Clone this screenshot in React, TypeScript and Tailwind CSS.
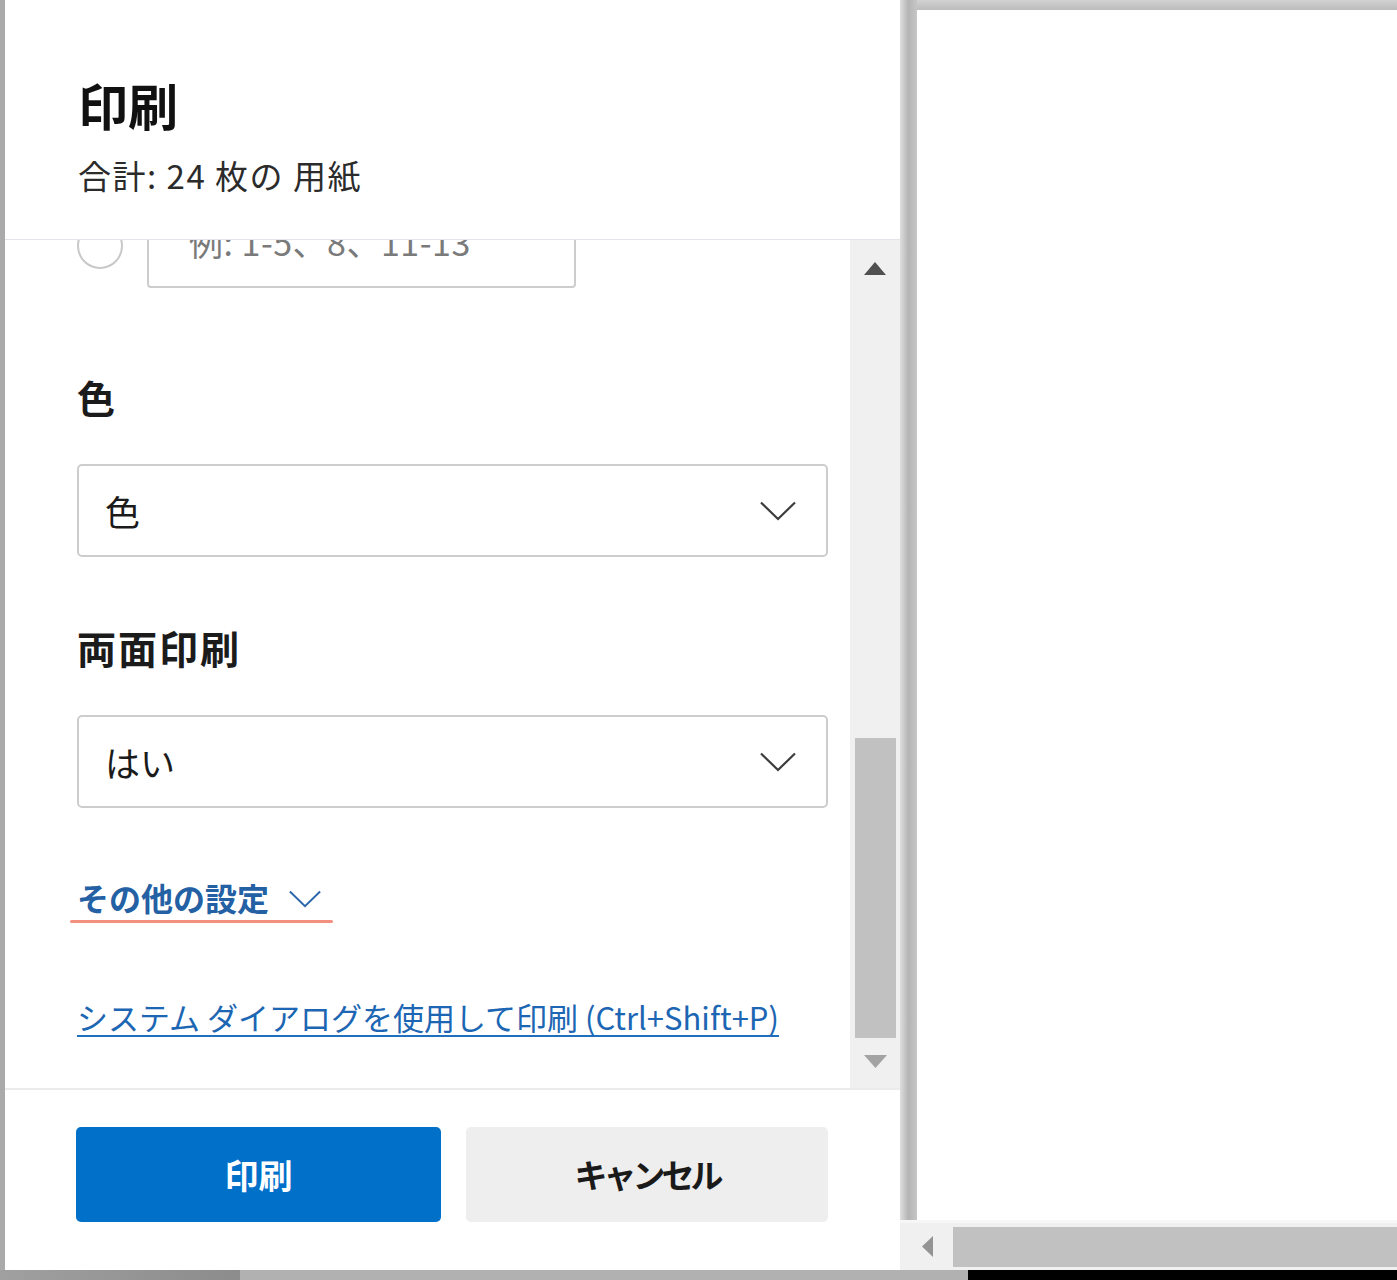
function Chevron({ className, color }: { className: string; color: string }) {
  return (
    <svg viewBox="0 0 36 20" className={className} fill="none">
      <path d="M1 1.5 L18 18 L35 1.5" stroke={color} strokeWidth="2.2" />
    </svg>
  );
}

function Select({ value }: { value: string }) {
  return (
    <div className="flex h-[93px] w-[751px] items-center justify-between rounded-[5px] border-2 border-[#cdcdcd] pl-[26px] pr-[30px]">
      <span className="text-[35px] leading-none text-[#1b1b1b]">{value}</span>
      <Chevron className="h-[20px] w-[36px]" color="#3d3d3d" />
    </div>
  );
}

export default function App() {
  return (
    <div className="flex h-[1280px] w-[1397px] flex-col overflow-hidden bg-[#b3b3b3] font-['Noto_Sans_CJK_JP',sans-serif]">
      <div className="flex h-[1270px]">
        <div className="w-[5px] bg-[#aaaaaa]" />

        {/* settings panel */}
        <div className="flex w-[895px] flex-col bg-white">
          <header className="h-[240px] border-b border-[#e4e4ec] pl-[73px] pt-[79px]">
            <h1 className="text-[50px] font-bold leading-none text-[#111]">印刷</h1>
            <p className="mt-[30px] text-[33px] leading-none tracking-[1.5px] text-[#2b2b2b]">合計: 24 枚の 用紙</p>
          </header>

          <div className="flex h-[848px]">
            <div className="flex-1 overflow-hidden pl-[72px]">
              <div className="mt-[-45px]">
                <div className="flex h-[93px] items-center gap-[24px]">
                  <div className="mt-[9px] h-[46px] w-[46px] rounded-full border-2 border-[#c8c8c8]" />
                  <div className="flex h-[93px] w-[429px] items-center rounded-[4px] border-2 border-[#cdcdcd] pl-[40px]">
                    <span className="text-[34px] leading-none tracking-[0.5px] text-[#7a7a7a]">例: 1-5、8、11-13</span>
                  </div>
                </div>

                <h2 className="mt-[90px] text-[38px] font-bold leading-none text-[#1b1b1b]">色</h2>
                <div className="mt-[48px]">
                  <Select value="色" />
                </div>

                <h2 className="mt-[71px] text-[39px] font-bold leading-none tracking-[2px] text-[#1b1b1b]">両面印刷</h2>
                <div className="mt-[48px]">
                  <Select value="はい" />
                </div>

                <div className="mt-[73px] flex items-center gap-[20px]">
                  <span className="text-[32px] font-semibold leading-none text-[#2460a4]">その他の設定</span>
                  <Chevron className="mt-[4px] h-[18px] w-[32px]" color="#2b66ab" />
                </div>
                <div className="ml-[-7px] mt-[7px] h-[3px] w-[263px] rounded-full bg-[#f4907f]" />

                <div className="mt-[78px]">
                  <span className="inline-block border-b-2 border-[#1f6fbf] pb-[3px] text-[31px] leading-none text-[#1c66b3]">
                    システム ダイアログを使用して印刷 (Ctrl+Shift+P)
                  </span>
                </div>
              </div>
            </div>

            {/* vertical scrollbar */}
            <div className="flex w-[50px] flex-col bg-[#f0f0f0]">
              <svg viewBox="0 0 22 13" className="ml-[14px] mt-[22px] h-[13px] w-[22px]">
                <path d="M11 0 L22 13 L0 13 Z" fill="#505050" />
              </svg>
              <div className="ml-[5px] mt-[463px] h-[300px] w-[41px] bg-[#c1c1c1]" />
              <svg viewBox="0 0 23 13" className="ml-[14px] mt-[17px] h-[13px] w-[23px]">
                <path d="M0 0 L23 0 L11.5 13 Z" fill="#a3a3a3" />
              </svg>
            </div>
          </div>

          <footer className="flex flex-1 gap-[25px] border-t-2 border-[#ebebeb] pl-[71px] pt-[37px]">
            <button className="h-[95px] w-[365px] rounded-[5px] bg-[#0070c9] text-[34px] font-bold text-white">
              印刷
            </button>
            <button className="h-[95px] w-[362px] rounded-[5px] bg-[#eeeeee] text-[33px] font-bold tracking-[-4px] text-[#1a1a1a]">
              キャンセル
            </button>
          </footer>
        </div>

        {/* preview */}
        <div className="flex flex-1 flex-col">
          <div className="flex flex-1">
            <div className="w-[17px] bg-gradient-to-r from-[#dedede] via-[#b4b4b4] to-[#c6c6c6]" />
            <div className="flex flex-1 flex-col">
              <div className="h-[10px] bg-gradient-to-b from-[#d2d2d2] to-[#bcbcbc]" />
              <div className="flex-1 bg-white" />
            </div>
          </div>
          <div className="flex h-[50px] items-center border-t-[3px] border-[#f6f6f6] bg-[#f0f0f0]">
            <svg viewBox="0 0 11 21" className="ml-[22px] h-[21px] w-[11px]">
              <path d="M11 0 L11 21 L0 10.5 Z" fill="#949494" />
            </svg>
            <div className="ml-[20px] h-[40px] flex-1 bg-[#c1c1c1]" />
          </div>
        </div>
      </div>

      <div className="flex h-[10px]">
        <div className="w-[240px] bg-gradient-to-r from-[#a0a0a0] to-[#8c8c8c]" />
        <div className="w-[728px] bg-[#b1b1b1]" />
        <div className="flex-1 bg-black" />
      </div>
    </div>
  );
}
